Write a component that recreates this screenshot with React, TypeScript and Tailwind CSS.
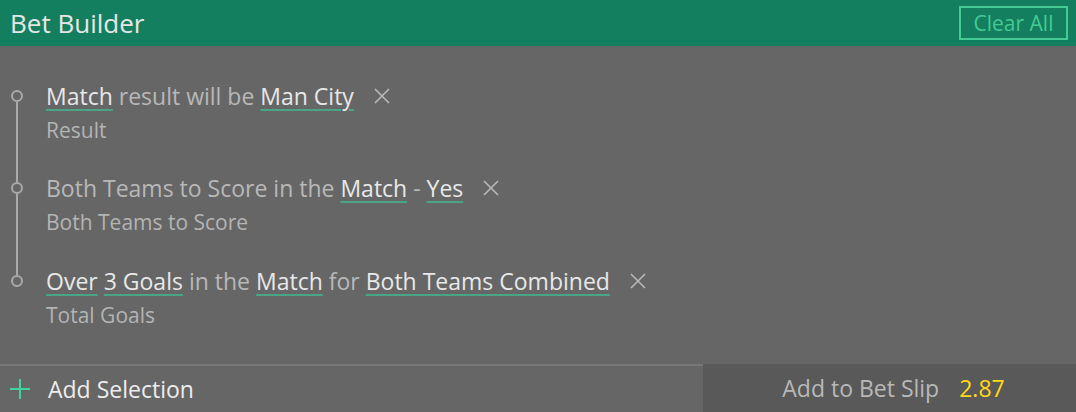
import React from "react";

type Part = { text: string; link?: boolean };

const items: { parts: Part[]; label: string }[] = [
  {
    parts: [
      { text: "Match", link: true },
      { text: " result will be " },
      { text: "Man City", link: true },
    ],
    label: "Result",
  },
  {
    parts: [
      { text: "Both Teams to Score in the " },
      { text: "Match", link: true },
      { text: " - " },
      { text: "Yes", link: true },
    ],
    label: "Both Teams to Score",
  },
  {
    parts: [
      { text: "Over", link: true },
      { text: " " },
      { text: "3 Goals", link: true },
      { text: " in the " },
      { text: "Match", link: true },
      { text: " for " },
      { text: "Both Teams Combined", link: true },
    ],
    label: "Total Goals",
  },
];

function CloseIcon() {
  return (
    <svg width="16" height="16" viewBox="0 0 16 16" className="ml-[20px] inline-block shrink-0">
      <path d="M1 1L15 15M15 1L1 15" stroke="#b8b8b8" strokeWidth="1.6" />
    </svg>
  );
}

export default function App() {
  return (
    <div
      className="w-[1076px] h-[412px] bg-[#666666] flex flex-col overflow-hidden"
      style={{ fontFamily: '"Open Sans", "Noto Sans", sans-serif' }}
    >
      {/* Header */}
      <div className="h-[46px] bg-[#137f5e] flex items-center justify-between pl-[10px] pr-[8px]">
        <span className="text-[26px] leading-none text-[#e6e6e6]">Bet Builder</span>
        <button className="h-[34px] w-[109px] border-2 border-[#45c995] text-[#45c995] text-[21px] leading-none flex items-center justify-center">
          Clear All
        </button>
      </div>

      {/* Selections */}
      <div className="flex-1 flex flex-col pt-[34.5px]">
        {items.map((item, i) => {
          const first = i === 0;
          const last = i === items.length - 1;
          return (
            <div key={i} className="flex">
              <div className="w-[34px] flex flex-col items-center self-stretch">
                <div className={`w-[2px] h-[9px] ${first ? "" : "bg-[#aaaaaa]"}`} />
                <div className="w-[12px] h-[12px] rounded-full border-2 border-[#aaaaaa] shrink-0" />
                <div className={`w-[2px] flex-1 ${last ? "" : "bg-[#aaaaaa]"}`} />
              </div>
              <div className={`ml-[12px] flex flex-col ${last ? "" : "pb-[30.5px]"}`}>
                <div className="flex items-center h-[30px] text-[23px] leading-[30px] whitespace-pre">
                  <span>
                    {item.parts.map((p, j) =>
                      p.link ? (
                        <span
                          key={j}
                          className="text-[#e8e8e8] underline decoration-2 underline-offset-4 decoration-[#4aa586]"
                        >
                          {p.text}
                        </span>
                      ) : (
                        <span key={j} className="text-[#b8b8b8]">
                          {p.text}
                        </span>
                      )
                    )}
                  </span>
                  <CloseIcon />
                </div>
                <div className="mt-[6px] text-[21px] leading-[26px] text-[#b4b4b4]">{item.label}</div>
              </div>
            </div>
          );
        })}
      </div>

      {/* Footer */}
      <div className="h-[48px] flex">
        <div className="flex-1 border-t-2 border-[#787878] flex items-center pl-[10px]">
          <svg width="20" height="20" viewBox="0 0 20 20">
            <path d="M10 0V20M0 10H20" stroke="#3fd49b" strokeWidth="2" />
          </svg>
          <span className="ml-[18px] text-[23px] leading-none text-[#ededed]">Add Selection</span>
        </div>
        <div className="w-[373px] bg-[#595959] flex items-center justify-center pl-[8px]">
          <span className="text-[23px] leading-none text-[#b8b8b8]">Add to Bet Slip</span>
          <span className="ml-[20px] text-[23px] leading-none text-[#ffd817]">2.87</span>
        </div>
      </div>
    </div>
  );
}
